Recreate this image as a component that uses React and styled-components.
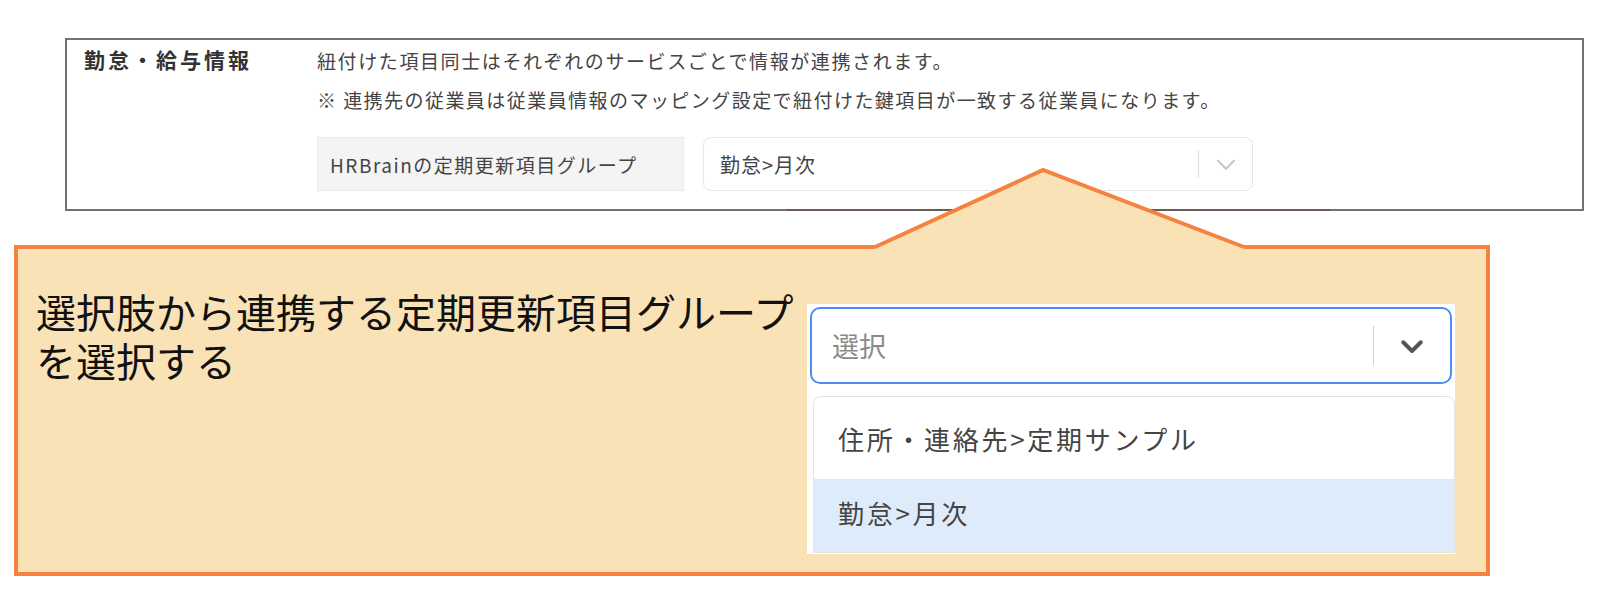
import * as React from "react";
import styled, { createGlobalStyle } from "styled-components";

const GlobalStyle = createGlobalStyle`
  body {
    margin: 0;
    background: #fff;
    font-family: "Noto Sans CJK JP", "Noto Sans", sans-serif;
    color: #333;
  }
`;

const Page = styled.div`
  padding-top: 38px;
  width: 1615px;
  height: 600px;
  box-sizing: border-box;
`;

const SettingsBox = styled.section`
  position: relative;
  margin-left: 65px;
  width: 1519px;
  box-sizing: border-box;
  border: 2px solid #737373;
  display: grid;
  grid-template-columns: 233px 1fr;
  padding: 1px 0 18px 17px;

  &::after {
    content: "";
    position: absolute;
    left: 719px;
    width: 544px;
    bottom: -2px;
    height: 2px;
    background: #6b5a55;
  }
`;

const Title = styled.h2`
  margin: 0;
  font-size: 21px;
  line-height: 37px;
  font-weight: 700;
  letter-spacing: 3px;
  color: #333;
`;

const Content = styled.div`
  display: flex;
  flex-direction: column;
`;

const Note = styled.p`
  margin: 0;
  font-size: 19px;
  line-height: 39px;
  letter-spacing: ${(p) => p.$spacing}px;
  color: #444;
`;

const FieldRow = styled.div`
  display: flex;
  gap: 19px;
  margin-top: 18px;
`;

const FieldLabel = styled.div`
  width: 367px;
  height: 54px;
  box-sizing: border-box;
  background: #f4f4f4;
  border: 1px solid #ececec;
  display: flex;
  align-items: center;
  padding-left: 12px;
  font-size: 19px;
  letter-spacing: 1.5px;
  color: #444;
`;

const Select = styled.div`
  width: ${(p) => p.$width}px;
  height: ${(p) => p.$height}px;
  box-sizing: border-box;
  border: ${(p) => (p.$focused ? "2px solid #4d8ff0" : "1px solid #e6e6e6")};
  border-radius: ${(p) => (p.$focused ? 10 : 8)}px;
  background: #fff;
  display: flex;
  align-items: center;
  padding-left: ${(p) => p.$pad}px;
  margin: ${(p) => p.$margin || 0};
`;

const SelectValue = styled.span`
  flex: 1;
  font-size: ${(p) => p.$size}px;
  letter-spacing: ${(p) => p.$spacing || 0}px;
  color: ${(p) => (p.$placeholder ? "#8a8a8a" : "#444")};
`;

const Divider = styled.span`
  width: 1px;
  height: ${(p) => p.$h}px;
  background: ${(p) => (p.$focused ? "#cfcfcf" : "#dcdcdc")};
`;

const Indicator = styled.span`
  width: ${(p) => p.$w}px;
  display: flex;
  align-items: center;
  justify-content: center;
`;

const Callout = styled.div`
  position: relative;
  margin: 34px 0 0 14px;
  width: 1476px;
  height: 331px;
  box-sizing: border-box;
  border: 4px solid #f6823f;
  background: #fae2b7;
  display: flex;
  align-items: flex-start;
  padding-left: 18px;
`;

const Pointer = styled.svg`
  position: absolute;
  left: 842px;
  top: -88px;
  overflow: visible;
`;

const CalloutText = styled.p`
  margin: 38px 0 0;
  width: 770px;
  font-size: 40px;
  line-height: 49px;
  color: #111;
`;

const Snapshot = styled.div`
  margin: 55px 0 0 1px;
  width: 648px;
  height: 250px;
  background: #fff;
  overflow: hidden;
`;

const Menu = styled.ul`
  list-style: none;
  margin: 12px 0 0 6px;
  padding: 8px 0 0;
  width: 642px;
  border: 1px solid #e4e4e4;
  border-radius: 8px 8px 0 0;
  box-sizing: border-box;
`;

const MenuItem = styled.li`
  height: ${(p) => p.$h}px;
  box-sizing: border-box;
  display: flex;
  align-items: center;
  padding: 0 0 7px 24px;
  font-size: 26px;
  letter-spacing: 2.7px;
  color: #444;
  background: ${(p) => (p.$active ? "#deebfb" : "transparent")};
`;

function Chevron({ size, color, weight }) {
  return (
    <svg width={size} height={size} viewBox="0 0 24 24">
      <polyline
        points="5,9 12,16 19,9"
        fill="none"
        stroke={color}
        strokeWidth={weight}
        strokeLinecap="round"
        strokeLinejoin="round"
      />
    </svg>
  );
}

export default function App() {
  return (
    <>
      <GlobalStyle />
      <Page>
        <SettingsBox>
          <Title>勤怠・給与情報</Title>
          <Content>
            <Note $spacing={1.6}>紐付けた項目同士はそれぞれのサービスごとで情報が連携されます。</Note>
            <Note $spacing={1.45}>※ 連携先の従業員は従業員情報のマッピング設定で紐付けた鍵項目が一致する従業員になります。</Note>
            <FieldRow>
              <FieldLabel>HRBrainの定期更新項目グループ</FieldLabel>
              <Select $width={550} $height={54} $pad={16}>
                <SelectValue $size={20} $spacing={1}>勤怠&gt;月次</SelectValue>
                <Divider $h={28} />
                <Indicator $w={53}>
                  <Chevron size={28} color="#c8c8c8" weight={1.8} />
                </Indicator>
              </Select>
            </FieldRow>
          </Content>
        </SettingsBox>

        <Callout>
          <Pointer width="400" height="92" viewBox="0 0 400 92">
            <polygon points="15,86 183,9 384,86 384,93 15,93" fill="#fae2b7" />
            <polyline
              points="15,86 183,9 384,86"
              fill="none"
              stroke="#f6823f"
              strokeWidth="4"
            />
          </Pointer>
          <CalloutText>選択肢から連携する定期更新項目グループを選択する</CalloutText>
          <Snapshot>
            <Select $width={642} $height={77} $pad={20} $focused $margin="3px 0 0 3px">
              <SelectValue $size={27} $placeholder>選択</SelectValue>
              <Divider $h={39} $focused />
              <Indicator $w={76}>
                <Chevron size={30} color="#555555" weight={3.2} />
              </Indicator>
            </Select>
            <Menu>
              <MenuItem $h={74}>住所・連絡先&gt;定期サンプル</MenuItem>
              <MenuItem $h={73} $active>勤怠&gt;月次</MenuItem>
            </Menu>
          </Snapshot>
        </Callout>
      </Page>
    </>
  );
}
